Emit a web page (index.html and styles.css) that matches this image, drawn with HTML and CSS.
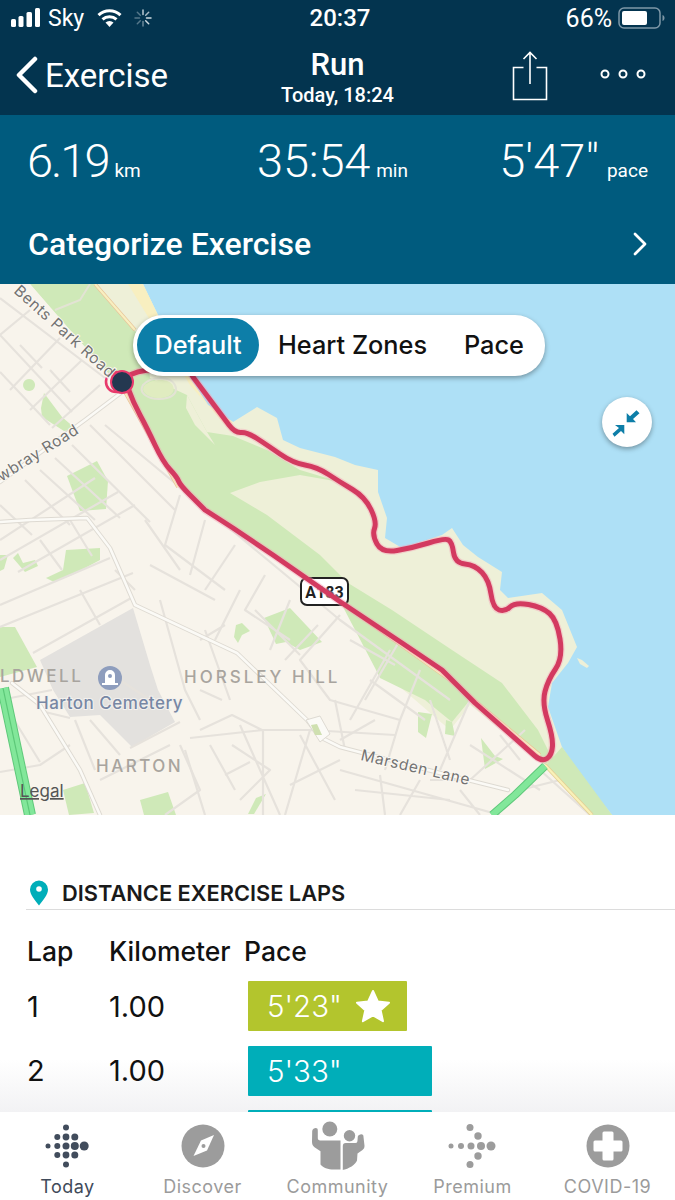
FILE: index.html
```html
<!DOCTYPE html>
<html lang="en">
<head>
<meta charset="utf-8">
<title>Run</title>
<link rel="stylesheet" href="styles.css">
</head>
<body>
<div class="screen">
  <header class="head">
    <div class="status">
      <div class="status-left">
        <svg class="signal" viewBox="0 0 30 20" width="30" height="20"><rect x="0" y="11" width="5" height="8" rx="1.5"/><rect x="7.500" y="8" width="5" height="11" rx="1.5"/><rect x="15.500" y="4" width="5.500" height="15" rx="1.5"/><rect x="24" y="0" width="5" height="19" rx="1.5"/></svg>
        <span class="carrier">Sky</span>
        <svg class="wifi" viewBox="0 0 25 18" width="25" height="18"><path d="M1.500 6.200a16 16 0 0 1 22 0" fill="none" stroke="#fff" stroke-width="3"/><path d="M5.500 10.400a10.400 10.400 0 0 1 14 0" fill="none" stroke="#fff" stroke-width="3"/><path d="M12.500 18l-4-4.400a5.600 5.600 0 0 1 8 0z" fill="#fff"/></svg>
        <svg class="spin" viewBox="0 0 18 18" width="18" height="18"><g stroke="#cfdbe2" stroke-width="1.500" stroke-linecap="round"><path d="M9 1v4.500" opacity=".9"/><path d="M14.700 3.300l-3 3" opacity=".8"/><path d="M17 9h-4.500"/><path d="M14.700 14.700l-3-3"/><path d="M9 17v-4.500" opacity=".5"/><path d="M3.300 14.700l3-3" opacity=".4"/><path d="M1 9h4.500" opacity=".4"/><path d="M3.300 3.300l3 3" opacity=".4"/></g></svg>
      </div>
      <div class="clock">20:37</div>
      <div class="status-right">
        <span>66%</span>
        <svg class="battery" viewBox="0 0 48 22" width="48" height="22"><rect x="1" y="1" width="41" height="20" rx="5" fill="none" stroke="#7f98a8" stroke-width="1.500"/><rect x="4" y="4" width="25" height="14" rx="2" fill="#fff"/><path d="M44.500 8v6c1.500-.5 2-1.800 2-3s-.5-2.500-2-3z" fill="#7f98a8"/></svg>
      </div>
    </div>
    <nav class="nav">
      <div class="back">
        <svg viewBox="0 0 24 40" width="24" height="40"><path d="M21 4L5 20l16 16" fill="none" stroke="#fff" stroke-width="4.500" stroke-linecap="round" stroke-linejoin="round"/></svg>
        <span>Exercise</span>
      </div>
      <div class="title">
        <div class="title-main">Run</div>
        <div class="title-sub">Today, 18:24</div>
      </div>
      <div class="actions">
        <svg class="share" viewBox="0 0 36 50" width="36" height="50"><path d="M11.500 16.500H1.500v32h33v-32h-10M18 33V2M11.500 8L18 1.500 24.500 8" fill="none" stroke="#fff" stroke-width="1.600"/></svg>
        <svg class="more" viewBox="0 0 48 12" width="48" height="12"><g fill="none" stroke="#fff" stroke-width="2"><circle cx="6" cy="6" r="3.500"/><circle cx="24" cy="6" r="3.500"/><circle cx="42" cy="6" r="3.500"/></g></svg>
      </div>
    </nav>
  </header>

  <section class="summary">
    <div class="stats">
      <div class="stat stat-dist"><span class="num">6.19</span><span class="unit">km</span></div>
      <div class="stat stat-time"><span class="num">35:54</span><span class="unit">min</span></div>
      <div class="stat stat-pace"><span class="num">5'47"</span><span class="unit">pace</span></div>
    </div>
    <div class="categorize">
      <span>Categorize Exercise</span>
      <svg viewBox="0 0 16 24" width="16" height="24"><path d="M3 2l10 10L3 22" fill="none" stroke="#fff" stroke-width="2.800" stroke-linecap="round" stroke-linejoin="round"/></svg>
    </div>
  </section>

  <section class="map">
    <svg class="map-art" viewBox="0 284 675 531" width="675" height="531">
      <defs>
        <path id="route" d="M125 378Q138 368 164 370L190 372L193 377L229 425Q235 433 241 432.500Q247 432 257 438.500Q267 445 280 454Q293 463 305 465Q317 467 328.500 474.500Q340 482 352.500 489.500Q365 497 371 509.500Q377 522 374.500 528.500Q372 535 377 544Q382 553 397 550.500Q412 548 428.500 543Q445 538 448.500 540Q452 542 453.500 552.500Q455 563 465 564Q475 565 482 572.500Q489 580 491 594Q493 608 499 610Q505 612 510 607Q515 602 528.500 604.500Q542 607 549.500 613.500Q557 620 560 639Q563 658 555.500 669Q548 680 545 691.500Q542 703 547.500 720Q553 737 552.500 746Q552 755 547 758.500Q542 762 535 756L475 703L442 670L402 643L342 603L273 555L233 528L205 510Q200 505 190 495Q180 485 178.500 481Q177 477 170 469.500Q163 462 155 445Q147 428 140 415Q133 402 128 388"/>
        <path id="road-a" d="M122 392L85 420L0 482M0 522L30 520L87 518L110 548L135 605L237 653L307 720L320 737L340 747L420 768L508 790"/>
        <path id="road-b" d="M12 683L40 705L80 770L100 815"/>
      </defs>
      <rect x="0" y="284" width="675" height="531" fill="#aee0f6"/>
      <!-- land / coast -->
      <path fill="#eef0d8" d="M0 284H143L157 313L172 345L190 378L208 405L233 422L257 407L277 418L283 440L300 448L335 457L355 465L378 470L378 492L387 518L385 538L402 548L442 535L452 528L463 545L478 557L502 572L500 590L508 598L542 593L562 610L577 647L568 663L552 683L548 707L562 747L582 777L612 815H0Z"/>
      <path fill="#eef0d8" d="M577 658l5 2 7 6-2 2-7-4z"/>
      <!-- sand and beach -->
      <path fill="#f8efc0" d="M115 284H143L157 313L172 345L190 378L208 405L233 422L228 428L190 385L150 320L128 284Z"/>
      <!-- park -->
      <path fill="#cfe9b8" d="M30 284H97L133 328L145 345L150 378L187 395L207 432L233 436L267 450L300 470L340 482L300 475L260 482L230 493L267 515L320 555L348 583L392 610L452 650L502 683L538 730L549 752L612 815H590L545 765L450 680L342 603L270 555L178 487L132 400L70 330Z"/>
      <path fill="#eef0d8" d="M187 395L207 432L215 445L195 425L186 408Z"/>
      <path fill="#f8f4ec" d="M0 284H30L70 330L128 396L178 487L270 555L342 603L378 668L450 730L470 705L545 765L590 815H0Z"/>
      <path fill="#cfe9b8" d="M335 590L440 660L470 700L452 722L425 700L380 678L375 668L342 605Z"/>
      <path fill="#f8efc0" d="M545 765l5-5 62 55h-10z"/>
      <path fill="#cfe9b8" d="M562 747l50 68h-18l-48-50z"/>
      <!-- minor park details -->
      <path fill="none" stroke="#e3e3d4" stroke-width="2" d="M55 310l25-10 10-16M143 385c8-9 28-9 32 0s-5 14-16 14-21-6-16-14z"/>
      <path fill="#e0ecc0" d="M144 386c8-8 26-8 29 0s-6 12-14 12-19-5-15-12z"/>
      <!-- town greens -->
      <g fill="#cfe9b8">
        <path d="M44 393l18 24 14 12-12 2-22-14-1-9z"/>
        <path d="M67 476l30-15 11 20-2 28-26 2z"/>
        <path d="M29 379a6 6 0 1 0 .1 0z"/>
        <path d="M13 558l5-5 5 10 12-3 3 6-13 6z"/>
        <path d="M46 578l17-8 3-20 34-2 0 12-28 15-18 7z"/>
        <path d="M0 627l15 0 22 40-37 10z"/>
        <path d="M264 618l26-10 32 34-22 8-14-8-10 2z"/>
        <path d="M236 625l6-2 8 8-8 4-4 8-4-6z"/>
        <path d="M63 790l22-7 9 30-25 2z"/>
        <path d="M140 800l28-8 8 23h-32z"/>
        <path d="M418 712l14 2-6 24-8-6z"/>
        <path d="M446 720l6 2 3 14-10-2z"/>
        <path d="M481 738l14 18 8 3-18 10z"/>
        <path d="M0 555l8 0-4 14-4 2z"/>
        <path d="M256 798l10-4-12 20h-6z"/>
      </g>
      <!-- cemetery -->
      <path fill="#e3e1de" d="M133 608L40 660L53 690L70 717L100 715L132 747L175 722L158 690L150 665Z"/>
      <!-- minor roads -->
      <g fill="none" stroke="#e6e2dc" stroke-width="2.200" stroke-linejoin="round">
        <path d="M0 298L105 378M0 335L72 412M0 372L50 425M30 310L0 335M60 338L10 390M82 360L30 410M100 385L52 428M20 345L42 368M50 370L70 392"/>
        <path d="M105 425L340 620L450 700M90 425L175 510M72 445L150 522M55 458L120 518M40 470L95 520M25 480L70 525M0 540L95 478M0 560L118 492M18 572L135 505M0 505L32 535M40 540L62 570M70 520L92 556"/>
        <path d="M0 627L133 573M33 653L133 597M0 605L110 558M80 590L100 625M115 570L135 590M145 520L180 570M180 495L165 545L225 590M205 520L190 575M235 545L205 590M150 565L215 600"/>
        <path d="M160 600L185 690L200 720M205 630L230 700M240 590L215 640M265 575L245 610L290 640M290 600L270 650M318 625L285 660M255 610L300 655M200 640L225 625"/>
        <path d="M200 690L222 700M200 730L232 715L262 730M190 738L263 730L310 730L395 735M185 750L205 815M210 745L235 790M232 745L270 770L240 800M263 730V815M300 735L335 800M290 785L340 760M225 775L250 762M240 725L280 815M310 730L285 815"/>
        <path d="M45 712L70 718M52 690L0 700M90 720L120 755M100 780L170 745M95 770L75 720M70 745L40 765L0 772M5 705L40 762M130 748L180 722M180 745L200 790L165 815M150 700L120 680"/>
        <path d="M340 615L300 660L330 700L400 720M350 640L395 665M390 650L350 720M370 680L425 720M400 640L365 700M420 670L400 720M375 720L340 740M400 720L385 770M430 700L450 760M470 700L440 770"/>
        <path d="M340 770L500 815M355 790L450 800M380 775L385 815M420 780L400 815M430 780L470 780L525 730M470 745L540 790M520 790L560 780M540 770L590 815M460 790L480 815M500 735L520 760M335 700L345 750"/>
      </g>
      <!-- main roads -->
      <g fill="none" stroke="#dedad2" stroke-width="4.400" stroke-linecap="round" stroke-linejoin="round">
        <use href="#road-a"/>
        <use href="#road-b"/>
      </g>
      <g fill="none" stroke="#fbfaf6" stroke-width="2.600" stroke-linecap="round" stroke-linejoin="round">
        <use href="#road-a"/>
        <use href="#road-b"/>
      </g>
      <path fill="#fbfaf6" stroke="#dedad2" d="M306 720l14-4 10 18-10 8z"/>
      <path fill="#cfe0b0" d="M311 725l6-1 5 11-7 0z"/>
      <!-- coast road -->
      <path fill="none" stroke="#e8c59a" stroke-width="3.600" d="M95 284L135 330M125 392L178 487M342 603L450 680L540 755"/>
      <path fill="none" stroke="#f8efc0" stroke-width="2.200" d="M95 284L135 330M125 392L178 487M342 603L450 680L540 755"/>
      <path fill="none" stroke="#e4cf95" stroke-width="4" d="M545 765L592 815"/>
      <path fill="none" stroke="#f9f1b8" stroke-width="2.400" d="M545 765L592 815"/>
      <!-- highlighted roads -->
      <g fill="none" stroke-linejoin="round">
        <path stroke="#5fc87a" stroke-width="12" d="M3 688L30 815"/>
        <path stroke="#82e79a" stroke-width="10" d="M3 688L30 815"/>
        <path stroke="#5cc878" stroke-width="1.200" d="M3 688L30 815"/>
        <path stroke="#5fc87a" stroke-width="8" d="M545 766L515 795L492 815"/>
        <path stroke="#82e79a" stroke-width="6" d="M545 766L515 795L492 815"/>
      </g>
      <!-- road sign -->
      <rect x="301" y="578" width="47" height="27" rx="6" fill="#fff" stroke="#222" stroke-width="2"/>
      <text class="sign" x="324.500" y="598" text-anchor="middle">A183</text>
      <!-- route -->
      <use href="#route" fill="none" stroke="#f4a5b8" stroke-opacity=".45" stroke-width="7.500" stroke-linejoin="round" stroke-linecap="round"/>
      <use href="#route" fill="none" stroke="#d33a60" stroke-width="5" stroke-linejoin="round" stroke-linecap="round"/>
      <circle cx="116" cy="382" r="10" fill="none" stroke="#e83a6c" stroke-width="2.600"/>
      <circle cx="122" cy="382" r="12" fill="#e83a6c"/>
      <circle cx="122" cy="382" r="10" fill="#243850"/>
      <!-- labels -->
      <text class="street" transform="translate(13 292) rotate(42)">Bents Park Road</text>
      <text class="street" transform="translate(-7 487) rotate(-32)">owbray Road</text>
      <text class="street" transform="translate(360 760) rotate(13)">Marsden Lane</text>
      <text class="place" x="0" y="682">LDWELL</text>
      <text class="place place-wide" x="184" y="683">HORSLEY HILL</text>
      <text class="place" x="96" y="772">HARTON</text>
      <text class="poi" x="36" y="709">Harton Cemetery</text>
      <circle cx="110" cy="678" r="12" fill="#8e9dbd"/>
      <path fill="#fff" d="M105 683v-8a5 5 0 0 1 10 0v8h3v2h-16v-2z"/>
      <circle cx="110" cy="676" r="2" fill="#8e9dbd"/>
      <text class="legal" x="20" y="797">Legal</text>
    </svg>
    <div class="switch">
      <span class="opt opt-on">Default</span>
      <span class="opt opt-zones">Heart Zones</span>
      <span class="opt opt-pace">Pace</span>
    </div>
    <button class="collapse">
      <svg viewBox="0 0 30 30" width="30" height="30"><g fill="#0d7ea8"><path d="M14.700 15.300V6l3.300 3.300 6.500-6 3 3-6.500 5.700 3 3.300z"/><path d="M12.300 18v9.300L9 24l-6.500 5.700-2-3L7 21l-4-3z"/></g></svg>
    </button>
  </section>

  <section class="laps">
    <div class="laps-head">
      <svg viewBox="0 0 20 26" width="20" height="26"><path d="M10 25.500C6 20 1 15 1 9.500a9 9 0 0 1 18 0C19 15 14 20 10 25.500z" fill="#00aeb9"/><circle cx="10" cy="9" r="2.800" fill="#fff"/></svg>
      <span>DISTANCE EXERCISE LAPS</span>
    </div>
    <div class="lap-table">
      <div class="lap-row lap-labels"><span>Lap</span><span>Kilometer</span><span>Pace</span></div>
      <div class="lap-row"><span>1</span><span>1.00</span><div class="bar bar-best"><span>5'23"</span>
        <svg viewBox="0 0 36 34" width="36" height="34"><path fill="#fff" stroke="#fff" stroke-width="2" stroke-linejoin="round" d="M18 2l4.800 10.500 11.200 1.200-8.400 7.500 2.400 11L18 26.500 7.900 32.200l2.400-11L2 13.700l11.200-1.200z"/></svg></div></div>
      <div class="lap-row"><span>2</span><span>1.00</span><div class="bar bar-two"><span>5'33"</span></div></div>
      <div class="lap-row"><span></span><span></span><div class="bar bar-three"></div></div>
    </div>
  </section>

  <footer class="tabs">
    <div class="tab tab-on">
      <svg class="tab-today" viewBox="0 0 50 44" width="50" height="44"><g fill="#414c5c">
        <circle cx="25" cy="3.500" r="3"/><circle cx="16.300" cy="13" r="3"/><circle cx="25" cy="13" r="3.400"/><circle cx="33.800" cy="13" r="3.500"/>
        <circle cx="7" cy="22" r="2.500"/><circle cx="16.300" cy="22" r="3"/><circle cx="25" cy="22" r="3.500"/><circle cx="33.800" cy="22" r="4"/><circle cx="43.200" cy="22" r="4.500"/>
        <circle cx="16.300" cy="31" r="3"/><circle cx="25" cy="31" r="3.400"/><circle cx="33.800" cy="31" r="3.500"/><circle cx="25" cy="40.500" r="3"/></g></svg>
      <span>Today</span>
    </div>
    <div class="tab">
      <svg viewBox="0 0 50 44" width="50" height="44"><circle cx="25" cy="22" r="21.500" fill="#9c9c9c"/><path d="M36 11L23 16.500 15.500 32 29 26.500z" fill="#fff"/><circle cx="25.500" cy="22" r="2" fill="#9c9c9c"/></svg>
      <span>Discover</span>
    </div>
    <div class="tab">
      <svg class="tab-tall" viewBox="307.500 1121 60 50" width="60" height="50"><g fill="#9c9c9c">
        <circle cx="329.300" cy="1129" r="7.500"/><circle cx="349" cy="1135.700" r="5.700"/>
        <path d="M311.700 1131c.3-2.500 3.800-4 5-2.500.6.800.6 1.500.6 3v6.500c0 1.500.7 2.500 2.500 2.500H340v29h-7c-5 0-11-2-13-5v-13.300l-6-4c-2-1.400-2.500-3.400-2.500-5.500z"/>
        <path d="M342.300 1170v-24c0-2 1-3 3-3h9.700c1.500 0 1.800-.8 2-2.500l.3-4c.1-1.500 4-3.300 5.200-1.600.4.500.5 1.100.5 2l1 8.800c0 2-.5 3-2 4.300l-5 3.500-.5 7c-1.500 4-8 8.500-14.700 9.500z"/></g></svg>
      <span>Community</span>
    </div>
    <div class="tab">
      <svg viewBox="0 0 50 44" width="50" height="44"><g fill="#9c9c9c">
        <circle cx="22" cy="3.500" r="3.500"/><circle cx="30" cy="12" r="3.700"/>
        <circle cx="3" cy="22" r="2.500"/><circle cx="13" cy="22" r="3"/><circle cx="23" cy="22" r="3.500"/><circle cx="33" cy="22" r="4"/><circle cx="43" cy="22" r="4.500"/>
        <circle cx="30" cy="32" r="3.700"/><circle cx="22" cy="40.500" r="3.500"/></g></svg>
      <span>Premium</span>
    </div>
    <div class="tab">
      <svg viewBox="0 0 50 44" width="50" height="44"><circle cx="25" cy="22" r="21.500" fill="#9c9c9c"/><path d="M21 7.500h8a1.500 1.500 0 0 1 1.500 1.500v7.500H38a1.500 1.500 0 0 1 1.500 1.500v8a1.500 1.500 0 0 1-1.500 1.500h-7.500V35a1.500 1.500 0 0 1-1.500 1.500h-8a1.500 1.500 0 0 1-1.500-1.500v-7.500H12a1.500 1.500 0 0 1-1.500-1.500v-8a1.500 1.500 0 0 1 1.500-1.500h7.500V9A1.500 1.500 0 0 1 21 7.500z" fill="#fff"/></svg>
      <span>COVID-19</span>
    </div>
  </footer>
</div>
</body>
</html>
```
FILE: styles.css
```css
* { box-sizing: border-box; }
html, body { margin: 0; padding: 0; }
body { background: #fff; font-family: "Inter", "Liberation Sans", sans-serif; color: #111; }
.screen { width: 675px; height: 1200px; display: flex; flex-direction: column; overflow: hidden; }

.head { height: 115px; background: #03344f; color: #fff; flex: none; }
.status { height: 36px; padding: 0 9px 0 11px; display: flex; align-items: center; justify-content: space-between; position: relative; font-size: 23px; font-family: "Roboto", sans-serif; }
.status-left { display: flex; align-items: center; gap: 7px; }
.signal { fill: #fff; }
.carrier { margin-right: 6px; }
.wifi { margin-right: 5px; }
.clock { font-size: 24px; font-weight: 500; position: absolute; left: 5px; right: 0; text-align: center; }
.status-right { display: flex; align-items: center; gap: 6px; font-size: 25px; }
.nav { height: 79px; padding: 0 28px 0 14px; display: flex; align-items: center; justify-content: space-between; position: relative; }
.back { display: flex; align-items: center; gap: 7px; font-family: "Roboto", sans-serif; font-size: 33px; margin-top: -1px; }
.title { position: absolute; left: 0; right: 0; top: 11px; text-align: center; font-family: "Roboto", sans-serif; }
.title-main { font-size: 31px; font-weight: 500; line-height: 36px; }
.title-sub { font-size: 20px; font-weight: 500; line-height: 23px; margin-top: 1px; }
.actions { display: flex; align-items: center; gap: 51px; }
.share { margin-top: 0; }
.more { margin-top: -4px; }

.summary { height: 169px; background: #005b7e; color: #fff; flex: none; padding: 0 27px 0 27px; display: flex; flex-direction: column; }
.stats { height: 90px; display: flex; align-items: center; justify-content: space-between; }
.stat { display: flex; align-items: baseline; gap: 6px; font-family: "Roboto", sans-serif; }
.num { font-size: 47px; font-weight: 300; }
.unit { font-size: 19px; font-weight: 400; }
.stat-dist .num { letter-spacing: -2px; }
.stat-time { margin-left: 25px; }
.stat-time .num { letter-spacing: -.2px; }
.stat-pace { gap: 8px; }
.categorize { flex: 1; padding: 0 0 2px 1px; display: flex; align-items: center; justify-content: space-between; font-family: "Roboto", sans-serif; font-size: 32px; font-weight: 500; }

.map { position: relative; width: 675px; height: 531px; flex: none; overflow: hidden; }
.map-art { display: block; }
.street { font-family: "Inter", sans-serif; font-size: 15.500px; fill: #737373; letter-spacing: .6px; paint-order: stroke; stroke: #fbf8f2; stroke-width: 2px; }
.place { font-family: "Inter", sans-serif; font-size: 17px; font-weight: 500; fill: #a8a49e; letter-spacing: 2.500px; }
.place-wide { letter-spacing: 3px; }
.poi { font-family: "Inter", sans-serif; font-size: 17px; font-weight: 500; fill: #7787a4; letter-spacing: .5px; paint-order: stroke; stroke: #f3f1ee; stroke-width: 2px; }
.legal { font-family: "Inter", sans-serif; font-size: 17px; fill: #555; text-decoration: underline; }
.sign { font-family: "Roboto", sans-serif; font-size: 16px; font-weight: 700; fill: #222; }
.switch { position: absolute; left: 133px; top: 31px; width: 412px; height: 61px; background: #fff; border-radius: 30px; box-shadow: 0 2px 5px rgba(0,0,0,.35); font-size: 25.300px; font-weight: 500; color: #111; }
.opt { position: absolute; top: 3px; height: 54px; line-height: 54px; }
.opt-on { left: 4px; width: 122px; text-align: center; background: #0d7ea8; border-radius: 27px; color: #fff; }
.opt-zones { left: 145px; }
.opt-pace { left: 331px; }
.collapse { position: absolute; left: 602px; top: 113px; width: 50px; height: 50px; border: 0; border-radius: 50%; background: #fff; padding: 10px; box-shadow: 0 2px 5px rgba(0,0,0,.35); }
.collapse svg { display: block; }

.laps { flex: 1; min-height: 0; overflow: hidden; padding-top: 64px; background: linear-gradient(to bottom, #fff 0, #fff 245px, #f2f2f4 297px); }
.laps-head { margin-left: 26px; height: 31px; display: flex; align-items: flex-start; gap: 13px; border-bottom: 1.500px solid #dcdcdc; font-size: 21.800px; font-weight: 600; color: #1a1a1a; padding-left: 3px; }
.laps-head svg { margin-top: 1px; }
.laps-head span { line-height: 28px; white-space: nowrap; }
.lap-table { padding: 25px 0 0 27px; }
.lap-row { display: grid; grid-template-columns: 82px 139px 1fr; align-items: center; height: 50px; margin-bottom: 14.500px; font-size: 29px; font-weight: 400; }
.lap-labels { height: 30px; margin-bottom: 16px; font-size: 26.500px; font-weight: 500; grid-template-columns: 82px 135px 1fr; white-space: nowrap; }
.bar { height: 50px; color: #fff; font-size: 29.500px; font-weight: 300; padding-left: 19px; display: flex; align-items: center; gap: 13px; border-radius: 1px; }
.bar-best { width: 159px; background: #b3c52d; }
.bar-two { width: 184px; background: #00aeb9; }
.bar-three { width: 184px; background: #00aeb9; }

.tabs { height: 88px; flex: none; background: #fff; display: grid; grid-template-columns: repeat(5, 135px); position: relative; }
.tab { position: relative; display: flex; flex-direction: column; align-items: center; padding-top: 12px; font-size: 18px; color: #9b9b9b; letter-spacing: .5px; }
.tab-today { margin-left: -3px; }
.tab-tall { margin-top: -3px; }
.tab span { position: absolute; top: 63px; line-height: 24px; }
.tab-on { color: #3f4a5a; }
```
